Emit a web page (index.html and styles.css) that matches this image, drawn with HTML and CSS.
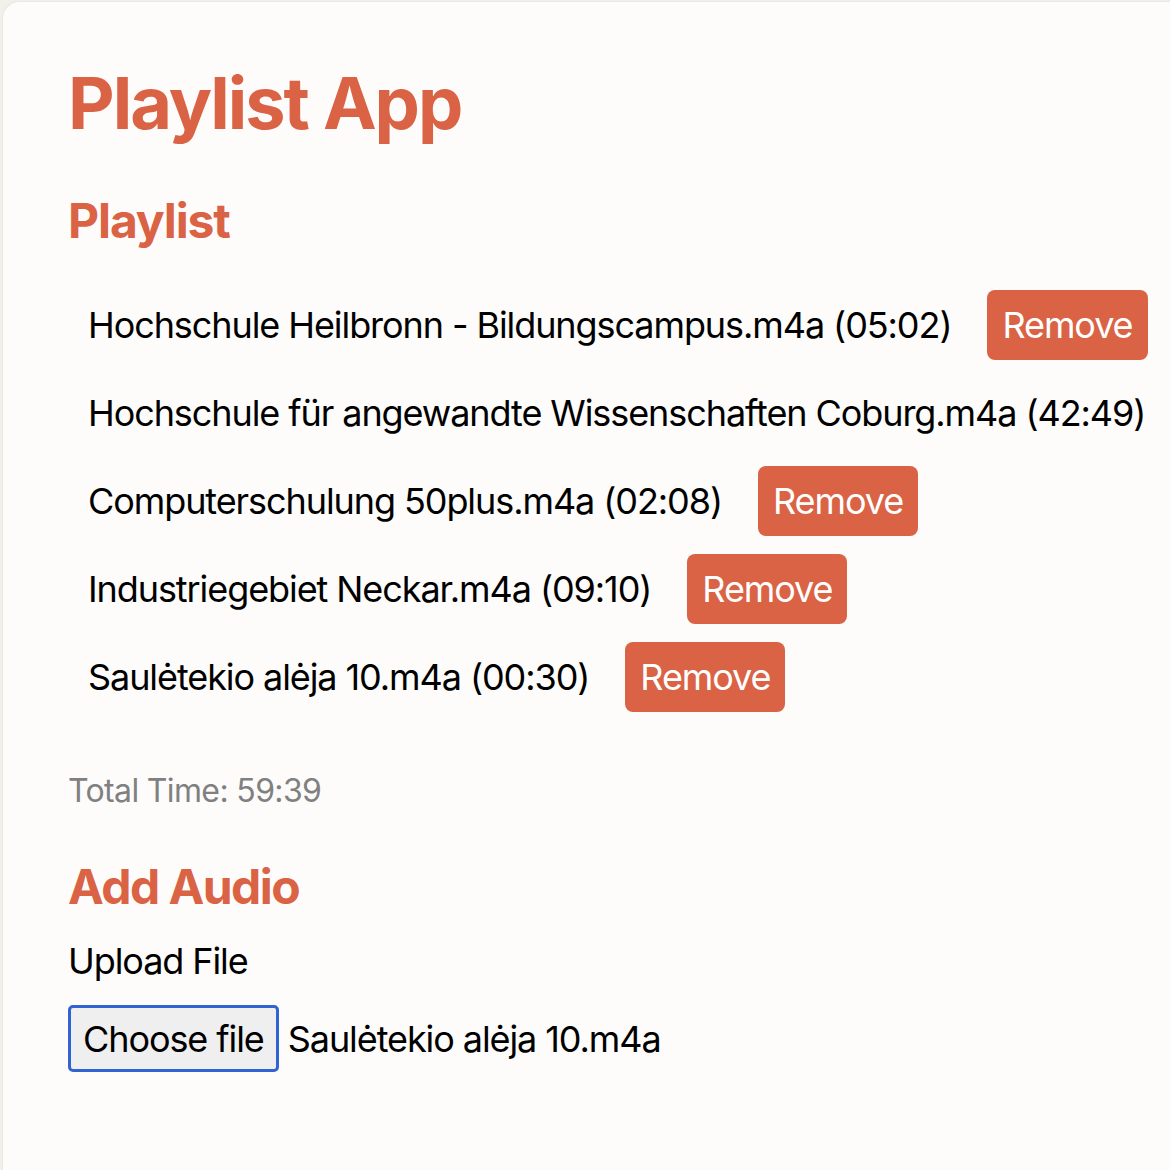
FILE: index.html
```html
<!DOCTYPE html>
<html lang="en">
<head>
<meta charset="utf-8">
<title>Playlist App</title>
<link rel="stylesheet" href="styles.css">
</head>
<body>
<div class="card">
  <h1 class="title">Playlist App</h1>
  <h2 class="section">Playlist</h2>
  <ul class="playlist">
    <li class="item"><span class="name">Hochschule Heilbronn - Bildungscampus.m4a (05:02)</span><button class="remove">Remove</button></li>
    <li class="item"><span class="name">Hochschule für angewandte Wissenschaften Coburg.m4a (42:49)</span><button class="remove">Remove</button></li>
    <li class="item"><span class="name">Computerschulung 50plus.m4a (02:08)</span><button class="remove">Remove</button></li>
    <li class="item"><span class="name">Industriegebiet Neckar.m4a (09:10)</span><button class="remove">Remove</button></li>
    <li class="item"><span class="name">Saulėtekio alėja 10.m4a (00:30)</span><button class="remove">Remove</button></li>
  </ul>
  <p class="total">Total Time: 59:39</p>
  <h2 class="section add">Add Audio</h2>
  <div class="label">Upload File</div>
  <div class="file-row"><span class="choose">Choose file</span><span class="filename">Saulėtekio alėja 10.m4a</span></div>
</div>
</body>
</html>
```

FILE: styles.css
```css
html, body {
  margin: 0;
  padding: 0;
  background: #f1f0eb;
  overflow: hidden;
  width: 1170px;
  height: 1170px;
}
body {
  font-family: Inter, "Noto Sans", "Liberation Sans", sans-serif;
  color: #000;
}
.card {
  margin: 2px 0 0 3px;
  padding: 58px 0 0 65px;
  width: 1400px;
  min-height: 1300px;
  background: #fdfcfb;
  border-radius: 16px;
  box-shadow: 0 0 2px rgba(0, 0, 0, 0.12);
  box-sizing: border-box;
}
.title {
  margin: 0;
  font-size: 72px;
  line-height: 86px;
  font-weight: 700;
  letter-spacing: -0.028em;
  color: #da6345;
}
.section {
  margin: 46px 0 0;
  font-size: 48px;
  line-height: 58px;
  font-weight: 700;
  letter-spacing: -0.023em;
  color: #da6345;
}
.playlist {
  list-style: none;
  margin: 40px 0 0;
  padding: 0 0 0 20px;
}
.item {
  display: flex;
  align-items: center;
  gap: 36px;
  height: 70px;
  margin-bottom: 18px;
  font-size: 36px;
  letter-spacing: -0.03em;
  white-space: nowrap;
}
.remove {
  flex: none;
  height: 70px;
  padding: 0 15px;
  border: none;
  border-radius: 8px;
  background: #da6345;
  color: #fff;
  font-family: inherit;
  font-size: 36px;
  letter-spacing: -0.03em;
}
.total {
  margin: 59px 0 0;
  font-size: 32px;
  line-height: 40px;
  letter-spacing: -0.02em;
  color: #808080;
}
.add {
  margin-top: 47px;
  letter-spacing: -0.032em;
}
.label {
  margin-top: 23px;
  font-size: 36px;
  line-height: 44px;
  letter-spacing: -0.03em;
}
.file-row {
  display: flex;
  align-items: center;
  gap: 9px;
  margin-top: 22px;
  font-size: 36px;
  letter-spacing: -0.03em;
}
.choose {
  display: inline-flex;
  align-items: center;
  height: 67px;
  padding: 0 12px;
  box-sizing: border-box;
  border: 3px solid #2f64d2;
  border-radius: 5px;
  background: #efefef;
}
```
